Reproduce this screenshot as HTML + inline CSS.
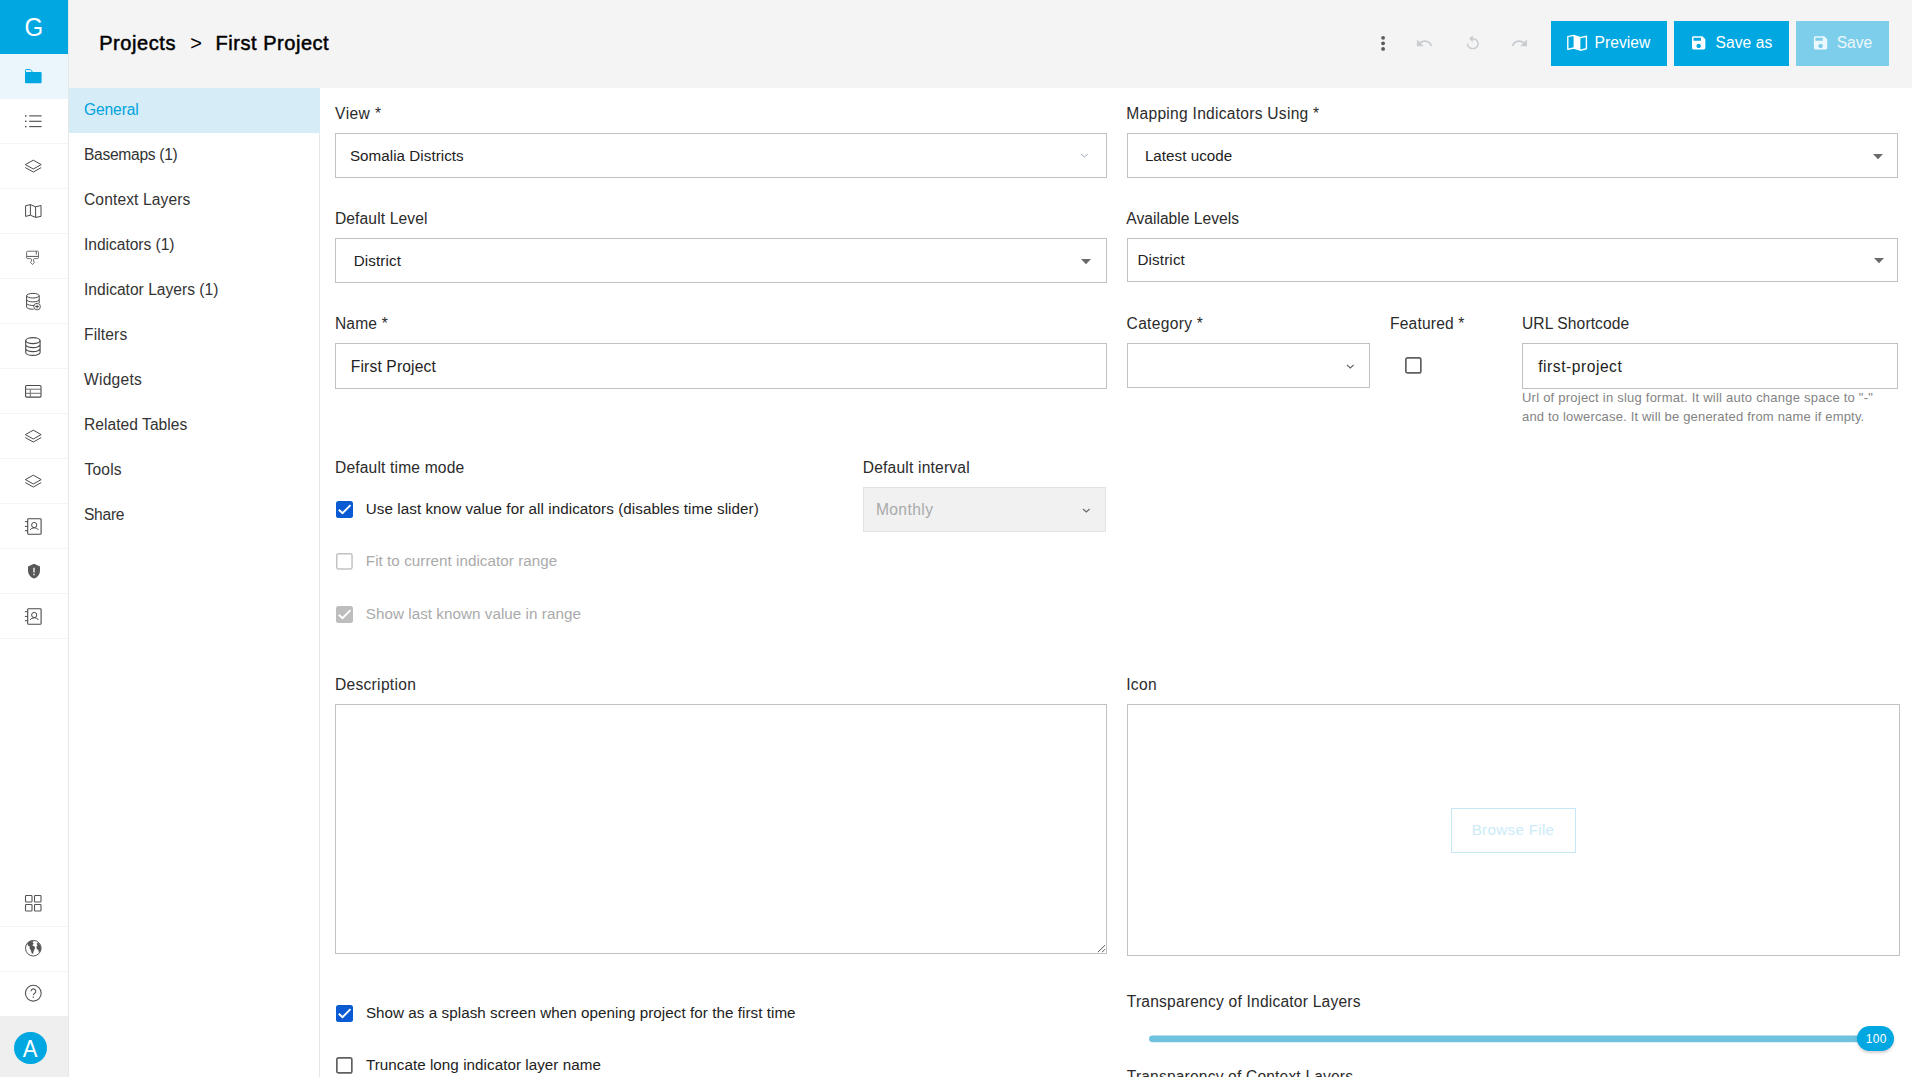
<!DOCTYPE html>
<html><head><meta charset="utf-8"><title>First Project</title>
<style>
html,body{margin:0;padding:0;width:1912px;height:1077px;overflow:hidden;background:#fff;font-family:"Liberation Sans",sans-serif;}
.t{position:absolute;white-space:nowrap;line-height:20px;font-family:"Liberation Sans",sans-serif;}
.b{position:absolute;box-sizing:content-box;}
.s{position:absolute;overflow:visible;}
#root{position:absolute;left:0;top:0;width:1912px;height:1077px;overflow:hidden;}
</style></head><body><div id="root">
<div class="b" style="left:0px;top:0px;width:1912px;height:88px;background:#f4f4f4"></div>
<div class="b" style="left:0px;top:0px;width:69px;height:1077px;background:#fff"></div>
<div class="b" style="left:68px;top:0px;width:1px;height:1077px;background:#e6e8e8"></div>
<div class="b" style="left:0px;top:0px;width:68px;height:54px;background:#00a7e1"></div>
<div class="b" style="left:0px;top:54px;width:68px;height:45px;background:#eaf6fc"></div>
<div class="b" style="left:0px;top:143px;width:68px;height:1px;background:#f5f5f5"></div>
<div class="b" style="left:0px;top:188px;width:68px;height:1px;background:#f5f5f5"></div>
<div class="b" style="left:0px;top:233px;width:68px;height:1px;background:#f5f5f5"></div>
<div class="b" style="left:0px;top:278px;width:68px;height:1px;background:#f5f5f5"></div>
<div class="b" style="left:0px;top:323px;width:68px;height:1px;background:#f5f5f5"></div>
<div class="b" style="left:0px;top:368px;width:68px;height:1px;background:#f5f5f5"></div>
<div class="b" style="left:0px;top:413px;width:68px;height:1px;background:#f5f5f5"></div>
<div class="b" style="left:0px;top:458px;width:68px;height:1px;background:#f5f5f5"></div>
<div class="b" style="left:0px;top:503px;width:68px;height:1px;background:#f5f5f5"></div>
<div class="b" style="left:0px;top:548px;width:68px;height:1px;background:#f5f5f5"></div>
<div class="b" style="left:0px;top:593px;width:68px;height:1px;background:#f5f5f5"></div>
<div class="b" style="left:0px;top:638px;width:68px;height:1px;background:#f5f5f5"></div>
<div class="b" style="left:0px;top:926px;width:68px;height:1px;background:#f5f5f5"></div>
<div class="b" style="left:0px;top:971px;width:68px;height:1px;background:#f5f5f5"></div>
<div class="b" style="left:0px;top:1016px;width:68px;height:61px;background:#efefef"></div>
<div class="b" style="left:319px;top:88px;width:1px;height:989px;background:#e6e6e6"></div>
<div class="b" style="left:69px;top:88px;width:251px;height:45px;background:#d6edf8"></div>
<div class="t" style="left:24.60px;top:17.75px;font-size:24px;color:#fff;letter-spacing:0.000px;transform:scaleY(1.05);transform-origin:0 18.5px;">G</div>
<div class="b" style="left:14.2px;top:1031.8px;width:32.5px;height:32.5px;border-radius:50%;background:#00a7e1"></div>
<div class="t" style="left:22.80px;top:1039.75px;font-size:22px;color:#fff;letter-spacing:0.000px;transform:scaleY(1.12);transform-origin:0 17.5px;">A</div>
<div class="t" style="left:99.20px;top:33.25px;font-size:20px;color:#000;letter-spacing:0.564px;-webkit-text-stroke:0.5px #000;">Projects</div>
<div class="t" style="left:190.20px;top:33.25px;font-size:20px;color:#000;letter-spacing:0.000px;">&gt;</div>
<div class="t" style="left:215.60px;top:33.25px;font-size:20px;color:#000;letter-spacing:0.531px;-webkit-text-stroke:0.5px #000;">First Project</div>
<div class="t" style="left:84.00px;top:99.75px;font-size:15.6px;color:#00a3dd;letter-spacing:-0.117px;">General</div>
<div class="t" style="left:84.00px;top:144.75px;font-size:15.6px;color:#333;letter-spacing:-0.302px;">Basemaps (1)</div>
<div class="t" style="left:84.00px;top:189.75px;font-size:15.6px;color:#333;letter-spacing:0.110px;">Context Layers</div>
<div class="t" style="left:84.00px;top:234.75px;font-size:15.6px;color:#333;letter-spacing:-0.038px;">Indicators (1)</div>
<div class="t" style="left:84.00px;top:279.75px;font-size:15.6px;color:#333;letter-spacing:0.001px;">Indicator Layers (1)</div>
<div class="t" style="left:84.00px;top:324.75px;font-size:15.6px;color:#333;letter-spacing:0.133px;">Filters</div>
<div class="t" style="left:84.00px;top:369.75px;font-size:15.6px;color:#333;letter-spacing:0.254px;">Widgets</div>
<div class="t" style="left:84.00px;top:414.75px;font-size:15.6px;color:#333;letter-spacing:0.033px;">Related Tables</div>
<div class="t" style="left:84.60px;top:459.75px;font-size:15.6px;color:#333;letter-spacing:0.156px;">Tools</div>
<div class="t" style="left:84.00px;top:504.75px;font-size:15.6px;color:#333;letter-spacing:-0.281px;">Share</div>
<div class="t" style="left:335.10px;top:103.75px;font-size:15.6px;color:#2b2b2b;letter-spacing:0.425px;">View *</div>
<div class="t" style="left:1126.30px;top:103.75px;font-size:15.6px;color:#2b2b2b;letter-spacing:0.261px;">Mapping Indicators Using *</div>
<div class="t" style="left:334.90px;top:208.75px;font-size:15.6px;color:#2b2b2b;letter-spacing:0.133px;">Default Level</div>
<div class="t" style="left:1126.30px;top:208.75px;font-size:15.6px;color:#2b2b2b;letter-spacing:0.020px;">Available Levels</div>
<div class="t" style="left:334.90px;top:313.75px;font-size:15.6px;color:#2b2b2b;letter-spacing:0.180px;">Name *</div>
<div class="t" style="left:1126.60px;top:313.75px;font-size:15.6px;color:#2b2b2b;letter-spacing:0.294px;">Category *</div>
<div class="t" style="left:1390.00px;top:313.75px;font-size:15.6px;color:#2b2b2b;letter-spacing:0.181px;">Featured *</div>
<div class="t" style="left:1522.00px;top:313.75px;font-size:15.6px;color:#2b2b2b;letter-spacing:0.098px;">URL Shortcode</div>
<div class="t" style="left:335.00px;top:457.75px;font-size:15.6px;color:#2b2b2b;letter-spacing:0.167px;">Default time mode</div>
<div class="t" style="left:862.70px;top:457.75px;font-size:15.6px;color:#2b2b2b;letter-spacing:0.200px;">Default interval</div>
<div class="t" style="left:334.90px;top:674.75px;font-size:15.6px;color:#2b2b2b;letter-spacing:0.300px;">Description</div>
<div class="t" style="left:1126.20px;top:674.75px;font-size:15.6px;color:#2b2b2b;letter-spacing:0.300px;">Icon</div>
<div class="t" style="left:1126.80px;top:991.75px;font-size:15.6px;color:#2b2b2b;letter-spacing:0.203px;">Transparency of Indicator Layers</div>
<div class="t" style="left:1126.80px;top:1066.75px;font-size:15.6px;color:#2b2b2b;letter-spacing:0.170px;">Transparency of Context Layers</div>
<div class="b" style="left:335px;top:133px;width:770px;height:43px;border:1px solid #c2c2c2;background:#fff;"></div>
<div class="b" style="left:1127px;top:133px;width:769px;height:43px;border:1px solid #c2c2c2;background:#fff;"></div>
<div class="b" style="left:335px;top:238px;width:770px;height:43px;border:1px solid #c2c2c2;background:#fff;"></div>
<div class="b" style="left:1127px;top:238px;width:769px;height:42px;border:1px solid #c2c2c2;background:#fff;"></div>
<div class="b" style="left:335px;top:343px;width:770px;height:44px;border:1px solid #c2c2c2;background:#fff;"></div>
<div class="b" style="left:1127px;top:343px;width:241px;height:43px;border:1px solid #c2c2c2;background:#fff;"></div>
<div class="b" style="left:1522px;top:343px;width:374px;height:44px;border:1px solid #c2c2c2;background:#fff;"></div>
<div class="b" style="left:863px;top:487px;width:241px;height:43px;border:1px solid #c2c2c2;background:#fff;background:#f1f1f1;border-color:#e2e2e2"></div>
<div class="b" style="left:335px;top:704px;width:770px;height:248px;border:1px solid #c2c2c2;background:#fff;"></div>
<div class="b" style="left:1127px;top:704px;width:771px;height:250px;border:1px solid #c2c2c2;background:#fff;"></div>
<div class="t" style="left:349.90px;top:145.75px;font-size:15.2px;color:#222;letter-spacing:0.042px;">Somalia Districts</div>
<div class="t" style="left:1144.90px;top:145.75px;font-size:15.2px;color:#222;letter-spacing:0.027px;">Latest ucode</div>
<div class="t" style="left:353.70px;top:250.75px;font-size:15.2px;color:#222;letter-spacing:0.132px;">District</div>
<div class="t" style="left:1137.50px;top:249.75px;font-size:15.2px;color:#222;letter-spacing:0.132px;">District</div>
<div class="t" style="left:350.80px;top:356.75px;font-size:15.6px;color:#222;letter-spacing:0.154px;">First Project</div>
<div class="t" style="left:1538.20px;top:356.75px;font-size:15.6px;color:#222;letter-spacing:0.540px;">first-project</div>
<div class="t" style="left:875.90px;top:499.75px;font-size:15.6px;color:#a9a9a9;letter-spacing:0.408px;">Monthly</div>
<div class="t" style="left:1522.00px;top:387.75px;font-size:13px;color:#838383;letter-spacing:0.231px;">Url of project in slug format. It will auto change space to "-"</div>
<div class="t" style="left:1522.00px;top:406.75px;font-size:13px;color:#838383;letter-spacing:0.177px;">and to lowercase. It will be generated from name if empty.</div>
<div class="t" style="left:365.80px;top:498.75px;font-size:15.2px;color:#222;letter-spacing:0.064px;">Use last know value for all indicators (disables time slider)</div>
<div class="t" style="left:365.80px;top:550.75px;font-size:15.2px;color:#aaa;letter-spacing:0.051px;">Fit to current indicator range</div>
<div class="t" style="left:365.80px;top:603.75px;font-size:15.2px;color:#aaa;letter-spacing:0.050px;">Show last known value in range</div>
<div class="t" style="left:365.90px;top:1002.75px;font-size:15.2px;color:#222;letter-spacing:0.054px;">Show as a splash screen when opening project for the first time</div>
<div class="t" style="left:365.90px;top:1054.75px;font-size:15.2px;color:#222;letter-spacing:0.052px;">Truncate long indicator layer name</div>
<svg class="s" style="left:335.7px;top:500.6px" width="17" height="17" viewBox="0 0 17 17"><rect x="0" y="0" width="17" height="17" rx="2.5" fill="#0a5bd3"/><path d="M2.8 8.7 L6.5 12.2 L14.5 4.1" fill="none" stroke="#fff" stroke-width="1.9"/></svg>
<svg class="s" style="left:335.6px;top:1004.5px" width="17" height="17" viewBox="0 0 17 17"><rect x="0" y="0" width="17" height="17" rx="2.5" fill="#0a5bd3"/><path d="M2.8 8.7 L6.5 12.2 L14.5 4.1" fill="none" stroke="#fff" stroke-width="1.9"/></svg>
<svg class="s" style="left:335.8px;top:605.8px" width="17" height="17" viewBox="0 0 17 17"><rect x="0" y="0" width="17" height="17" rx="2.5" fill="#bdbdbd"/><path d="M2.8 8.7 L6.5 12.2 L14.5 4.1" fill="none" stroke="#fff" stroke-width="1.9"/></svg>
<svg class="s" style="left:335.9px;top:553.0px" width="16.8" height="16.8" viewBox="0 0 16.8 16.8"><rect x="0.75" y="0.75" width="15.3" height="15.3" rx="1.7" fill="#fff" stroke="#c2c2c2" stroke-width="1.5"/></svg>
<svg class="s" style="left:335.9px;top:1056.8px" width="16.7" height="16.7" viewBox="0 0 16.7 16.7"><rect x="0.85" y="0.85" width="15.0" height="15.0" rx="1.7" fill="#fff" stroke="#606060" stroke-width="1.7"/></svg>
<svg class="s" style="left:1404.9px;top:356.6px" width="16.7" height="16.7" viewBox="0 0 16.7 16.7"><rect x="0.85" y="0.85" width="15.0" height="15.0" rx="1.7" fill="#fff" stroke="#606060" stroke-width="1.7"/></svg>
<svg class="s" style="left:1081.2px;top:258.79999999999995px;" width="10" height="5.2" viewBox="0 0 10 5.2"><path d="M0 0 L10 0 L5 5.2 Z" fill="#6a6a6a"/></svg>
<svg class="s" style="left:1873.4px;top:153.9px;" width="10" height="5.2" viewBox="0 0 10 5.2"><path d="M0 0 L10 0 L5 5.2 Z" fill="#6a6a6a"/></svg>
<svg class="s" style="left:1874.1px;top:257.9px;" width="10" height="5.2" viewBox="0 0 10 5.2"><path d="M0 0 L10 0 L5 5.2 Z" fill="#6a6a6a"/></svg>
<svg class="s" style="left:1080.1px;top:152.9px;" width="8.8" height="5.0" viewBox="0 0 8.8 5.0"><path d="M1 1 L4.4 4.0 L7.8 1" fill="none" stroke="#9aa7b3" stroke-width="1"/></svg>
<svg class="s" style="left:1346.2px;top:363.55px;" width="8.6" height="4.9" viewBox="0 0 8.6 4.9"><path d="M1 1 L4.3 3.9 L7.6 1" fill="none" stroke="#666" stroke-width="1.15"/></svg>
<svg class="s" style="left:1082.2px;top:508.05px;" width="8.6" height="4.9" viewBox="0 0 8.6 4.9"><path d="M1 1 L4.3 3.9 L7.6 1" fill="none" stroke="#666" stroke-width="1.15"/></svg>
<svg class="s" style="left:1094px;top:941px;" width="12" height="12" viewBox="1094 941 12 12"><path d="M1105 945.2 L1097.9 952.2 M1105 949.2 L1102 952.2" stroke="#555" stroke-width="1" fill="none"/></svg>
<div class="b" style="left:1451px;top:808px;width:123px;height:43px;border:1px solid #c6e8f6;background:#fff"></div>
<div class="t" style="left:1471.70px;top:819.75px;font-size:15.2px;color:#cbebf8;letter-spacing:0.302px;">Browse File</div>
<svg class="s" style="left:1148px;top:1030px;" width="740" height="16" viewBox="1148 1030 740 16"><rect x="1149" y="1035.4" width="735" height="6.8" rx="3.4" fill="#71c1e0"/></svg>
<div class="b" style="left:1856.9px;top:1026.1px;width:37px;height:25px;border-radius:12.5px;background:#00a7e1;box-shadow:0 2px 3px rgba(0,0,0,0.18)"></div>
<div class="t" style="left:1865.80px;top:1029.25px;font-size:12px;color:#fff;letter-spacing:0.300px;">100</div>
<div class="b" style="left:1551px;top:21px;width:116px;height:45px;background:#00a7e1"></div>
<div class="b" style="left:1674px;top:21px;width:115px;height:45px;background:#00a7e1"></div>
<div class="b" style="left:1796px;top:21px;width:93px;height:45px;background:#7dceeb"></div>
<div class="t" style="left:1594.50px;top:32.75px;font-size:15.6px;color:#fff;letter-spacing:0.046px;">Preview</div>
<div class="t" style="left:1715.40px;top:32.75px;font-size:15.6px;color:#fff;letter-spacing:0.087px;">Save as</div>
<div class="t" style="left:1836.70px;top:32.75px;font-size:15.6px;color:#ecf8fd;letter-spacing:0.000px;">Save</div>
<svg class="s" style="left:0;top:0" width="69" height="1077" viewBox="0 0 69 1077" fill="none">
<path d="M25 73.1 a1 1 0 0 1 1 -1 H40.6 a1 1 0 0 1 1 1 V82.3 a1 1 0 0 1 -1 1 H26 a1 1 0 0 1 -1 -1 Z" fill="#00a7e1"/>
<path d="M25.5 72.4 V70.3 a0.8 0.8 0 0 1 0.8 -0.8 H30.2 L32.6 72.2" stroke="#00a7e1" stroke-width="1"/>
<path d="M29.2 115.9 H41.6" stroke="#4a4a4a" stroke-width="1.1"/>
<rect x="25" y="115.2" width="1.5" height="1.4" fill="#4a4a4a"/>
<path d="M29.2 121.3 H41.6" stroke="#4a4a4a" stroke-width="1.1"/>
<rect x="25" y="120.6" width="1.5" height="1.4" fill="#4a4a4a"/>
<path d="M29.2 126.6 H41.6" stroke="#4a4a4a" stroke-width="1.1"/>
<rect x="25" y="125.89999999999999" width="1.5" height="1.4" fill="#4a4a4a"/>
<path d="M33.3 160.2 L41.2 164.6 L33.3 169 L25.3 164.6 Z" stroke="#4a4a4a" stroke-width="1" stroke-linejoin="round"/>
<path d="M25.3 167.6 L33.3 172 L41.2 167.6" stroke="#4a4a4a" stroke-width="1" stroke-linejoin="round"/>
<path d="M33.3 430.2 L41.2 434.6 L33.3 439 L25.3 434.6 Z" stroke="#4a4a4a" stroke-width="1" stroke-linejoin="round"/>
<path d="M25.3 437.6 L33.3 442 L41.2 437.6" stroke="#4a4a4a" stroke-width="1" stroke-linejoin="round"/>
<path d="M33.3 475.2 L41.2 479.6 L33.3 484 L25.3 479.6 Z" stroke="#4a4a4a" stroke-width="1" stroke-linejoin="round"/>
<path d="M25.3 482.6 L33.3 487 L41.2 482.6" stroke="#4a4a4a" stroke-width="1" stroke-linejoin="round"/>
<path d="M25.6 205.8 L30.4 204.6 L35.6 206.8 L41 205.5 V216.4 L35.6 217.4 L30.4 215.2 L25.6 216.4 Z M30.4 204.6 V215.2 M35.6 206.8 V217.4" stroke="#4a4a4a" stroke-width="1" stroke-linejoin="round"/>
<path d="M30.6 258.6 H27.8 a1.2 1.2 0 0 1 -1.2 -1.2 V252.3 a1.1 1.1 0 0 1 1.1 -1.1 H37.4 a1.1 1.1 0 0 1 1.1 1.1 V257.4 a1.2 1.2 0 0 1 -1.2 1.2 H34.5 Q33.5 258.7 33.5 259.8 V260.9 L34.5 262.4 L32.5 264.5 L30.5 262.4 L31.5 260.9 V259.8 Q31.5 258.7 30.6 258.6" stroke="#606060" stroke-width="0.9" stroke-linejoin="round"/>
<path d="M26.6 256.4 H38.5" stroke="#555" stroke-width="1"/>
<path d="M36.3 251.4 V254.5" stroke="#4a4a4a" stroke-width="0.9"/>
<ellipse cx="32.9" cy="295.7" rx="6.3" ry="2.3" stroke="#4a4a4a" stroke-width="1"/>
<path d="M26.6 295.7 V307 a6.3 2.3 0 0 0 7 2.25 M39.2 295.7 V303 M26.6 299.6 a6.3 2.3 0 0 0 12.6 0 M26.6 303.4 a6.3 2.3 0 0 0 8 2" stroke="#4a4a4a" stroke-width="1"/>
<circle cx="37.1" cy="306.6" r="3.3" fill="#fff" stroke="#4a4a4a" stroke-width="0.9"/>
<path d="M35.2 306.6 H39 M37.1 304.7 V308.5" stroke="#4a4a4a" stroke-width="1"/>
<ellipse cx="32.9" cy="340.6" rx="7.2" ry="3" stroke="#4a4a4a" stroke-width="1.1"/>
<path d="M25.7 340.6 V352.4 a7.2 3 0 0 0 14.4 0 V340.6 M25.7 344.6 a7.2 3 0 0 0 14.4 0 M25.7 348.6 a7.2 3 0 0 0 14.4 0" stroke="#4a4a4a" stroke-width="1.1"/>
<rect x="25.6" y="385.5" width="15.4" height="11.6" rx="1" stroke="#4a4a4a" stroke-width="1.1"/>
<path d="M25.6 389.2 H41 M25.6 393.3 H41 M30.3 389.2 V397.1" stroke="#707070" stroke-width="1"/>
<rect x="27.7" y="518.7" width="13.4" height="15.6" rx="0.9" stroke="#4a4a4a" stroke-width="1.1"/>
<path d="M24.9 521.7 H27.7 M24.9 526.4 H27.7 M24.9 530.7 H27.7" stroke="#4a4a4a" stroke-width="1"/>
<circle cx="34.2" cy="525.0" r="2.6" stroke="#4a4a4a" stroke-width="1"/>
<path d="M30.2 529.9 C31.4 527.2 37.2 527.2 38.4 529.9" stroke="#4a4a4a" stroke-width="1"/>
<rect x="27.7" y="608.7" width="13.4" height="15.6" rx="0.9" stroke="#4a4a4a" stroke-width="1.1"/>
<path d="M24.9 611.7 H27.7 M24.9 616.4 H27.7 M24.9 620.7 H27.7" stroke="#4a4a4a" stroke-width="1"/>
<circle cx="34.2" cy="615.0" r="2.6" stroke="#4a4a4a" stroke-width="1"/>
<path d="M30.2 619.9 C31.4 617.2 37.2 617.2 38.4 619.9" stroke="#4a4a4a" stroke-width="1"/>
<g transform="translate(26 563.2) scale(0.6667)"><path d="M12 1L3 5v6c0 5.55 3.84 10.74 9 12 5.16-1.26 9-6.45 9-12V5l-9-4z" fill="#585858"/><path d="M11 7h2v7h-2z M11 16h2v2h-2z" fill="#fff"/></g>
<rect x="25.5" y="895.5" width="6.5" height="6.5" rx="0.8" stroke="#555" stroke-width="1.1"/>
<rect x="34.5" y="895.5" width="6.5" height="6.5" rx="0.8" stroke="#555" stroke-width="1.1"/>
<rect x="25.5" y="904.5" width="6.5" height="6.5" rx="0.8" stroke="#555" stroke-width="1.1"/>
<rect x="34.5" y="904.5" width="6.5" height="6.5" rx="0.8" stroke="#555" stroke-width="1.1"/>
<circle cx="33.3" cy="948.2" r="7.8" stroke="#555" stroke-width="1" fill="#fff"/>
<path d="M27.4 943.2 L29 941.8 L31.4 941 L33.6 941.2 L32.6 942.8 L33.8 943.8 L32.2 945.2 L34.6 946.4 L35 948.6 L33.6 951 L33.2 953.8 L31.8 953.4 L30.8 950.2 L29.4 948 L29.8 946.4 L27.8 945.6 Z" fill="#555"/>
<path d="M36.4 943.8 L38.2 942.8 L40.4 945.6 L41 948 L40.4 951 L38.8 952.6 L38.4 950 L36.8 949 L36.4 946.6 L37.6 945.2 Z" fill="#555"/>
<circle cx="33.3" cy="993.2" r="7.9" stroke="#555" stroke-width="1.1"/>
<path d="M31 991.2 a2.4 2.3 0 1 1 3.6 2 c-0.9 0.6 -1.3 1 -1.3 2.1" stroke="#555" stroke-width="1.1"/><rect x="32.7" y="996.6" width="1.2" height="1.3" fill="#555"/>
</svg>
<svg class="s" style="left:1360px;top:16px" width="360" height="56" viewBox="1360 16 360 56" fill="none">
<circle cx="1383.1" cy="37.8" r="1.9" fill="#5a5a5a"/>
<circle cx="1383.1" cy="43.3" r="1.9" fill="#5a5a5a"/>
<circle cx="1383.1" cy="48.9" r="1.9" fill="#5a5a5a"/>
<g transform="translate(1415.4 34.15) scale(0.75)"><path d="M12.5 8c-2.65 0-5.05.99-6.9 2.6L2 7v9h9l-3.62-3.62c1.39-1.16 3.16-1.88 5.12-1.88 3.54 0 6.55 2.31 7.6 5.5l2.37-.78C21.08 11.03 17.15 8 12.5 8z" fill="#c9cdd2"/></g>
<g transform="translate(1528.5 34.15) scale(-0.75 0.75)"><path d="M12.5 8c-2.65 0-5.05.99-6.9 2.6L2 7v9h9l-3.62-3.62c1.39-1.16 3.16-1.88 5.12-1.88 3.54 0 6.55 2.31 7.6 5.5l2.37-.78C21.08 11.03 17.15 8 12.5 8z" fill="#c9cdd2"/></g>
<g transform="translate(1463.8 34.6) scale(0.75 0.7)"><path d="M12 5V1L7 6l5 5V7c3.31 0 6 2.69 6 6s-2.69 6-6 6-6-2.69-6-6H4c0 4.42 3.58 8 8 8s8-3.58 8-8-3.58-8-8-8z" fill="#c9cdd2"/></g>
<path d="M1567.8 36.6 L1573.6 35.4 L1580.4 37.6 L1586.4 36.2 V48.8 L1580.4 50.2 L1573.6 48 L1567.8 49.4 Z" stroke="#fff" stroke-width="1.4" stroke-linejoin="round"/>
<path d="M1573.6 35.4 L1580.4 37.6 V50.2 L1573.6 48 Z" fill="#fff"/>
<g transform="translate(1689.8 34.05) scale(0.74)"><path d="M17 3H5c-1.11 0-2 .9-2 2v14c0 1.1.89 2 2 2h14c1.1 0 2-.9 2-2V7l-4-4zm-5 16c-1.66 0-3-1.34-3-3s1.34-3 3-3 3 1.34 3 3-1.34 3-3 3zm3-10H5V5h10v4z" fill="#fff"/></g>
</svg>
<svg class="s" style="left:1800px;top:16px" width="60" height="56" viewBox="1800 16 60 56" fill="none">
<g transform="translate(1811.7 34.05) scale(0.74)"><path d="M17 3H5c-1.11 0-2 .9-2 2v14c0 1.1.89 2 2 2h14c1.1 0 2-.9 2-2V7l-4-4zm-5 16c-1.66 0-3-1.34-3-3s1.34-3 3-3 3 1.34 3 3-1.34 3-3 3zm3-10H5V5h10v4z" fill="#ecf8fd"/></g>
</svg>
</div></body></html>
